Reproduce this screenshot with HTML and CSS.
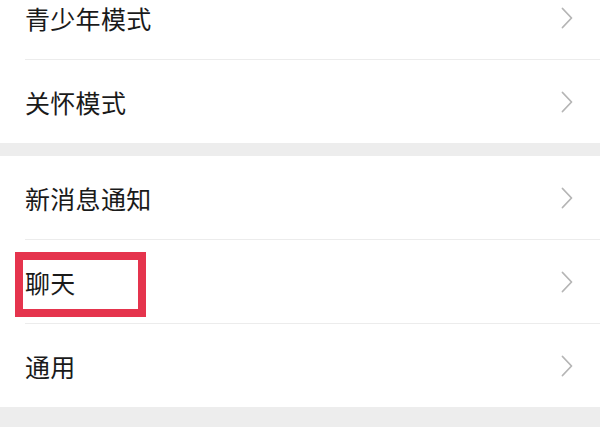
FILE: index.html
```html
<!DOCTYPE html>
<html lang="zh">
<head>
<meta charset="utf-8">
<link rel="stylesheet" href="styles.css">
</head>
<body>
<div class="page">
  <div class="group">
    <div class="row"><span class="label">青少年模式</span><svg class="chev" viewBox="0 0 12 22"><path d="M1.5 1.5 L10.5 11 L1.5 20.5"/></svg></div>
    <div class="row"><span class="label">关怀模式</span><svg class="chev" viewBox="0 0 12 22"><path d="M1.5 1.5 L10.5 11 L1.5 20.5"/></svg></div>
  </div>
  <div class="group">
    <div class="row"><span class="label">新消息通知</span><svg class="chev" viewBox="0 0 12 22"><path d="M1.5 1.5 L10.5 11 L1.5 20.5"/></svg></div>
    <div class="row highlighted"><span class="label">聊天</span><svg class="chev" viewBox="0 0 12 22"><path d="M1.5 1.5 L10.5 11 L1.5 20.5"/></svg><div class="mark"></div></div>
    <div class="row"><span class="label">通用</span><svg class="chev" viewBox="0 0 12 22"><path d="M1.5 1.5 L10.5 11 L1.5 20.5"/></svg></div>
  </div>
</div>
</body>
</html>
```
FILE: styles.css
```css
html, body {
  margin: 0;
  padding: 0;
  background: #ededed;
  font-family: "Noto Sans CJK SC", "Noto Sans", sans-serif;
}
.page {
  margin-top: -24px;
  display: flex;
  flex-direction: column;
  gap: 13px;
}
.group {
  background: #ffffff;
  padding-left: 25px;
}
.row {
  position: relative;
  height: 83px;
  display: flex;
  align-items: center;
  justify-content: space-between;
  padding-right: 27px;
}
.row + .row {
  border-top: 1px solid #ececec;
}
.label {
  font-size: 25px;
  color: #1a1a1a;
  letter-spacing: 0.3px;
}
.chev {
  width: 12px;
  height: 22px;
  fill: none;
  stroke: #b5b5b5;
  stroke-width: 1.8;
  stroke-linecap: round;
  stroke-linejoin: round;
}
.mark {
  position: absolute;
  left: -10px;
  top: 12px;
  width: 131px;
  height: 65px;
  box-sizing: border-box;
  border: 8px solid #e5344d;
}
```
